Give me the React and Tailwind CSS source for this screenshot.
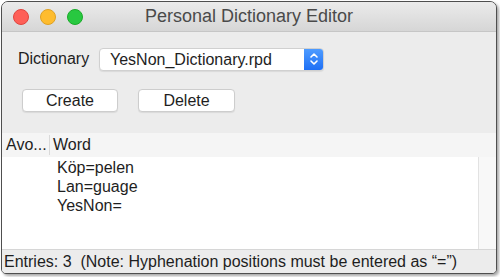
const rows = ["Köp=pelen", "Lan=guage", "YesNon="];

const Stepper = () => (
  <svg width="10" height="14" viewBox="0 0 10 14" fill="none" stroke="white" strokeWidth="1.6" strokeLinecap="round" strokeLinejoin="round">
    <path d="M2 5 L5 2 L8 5" />
    <path d="M2 9 L5 12 L8 9" />
  </svg>
);

const App = () => {
  return (
    <div
      className="w-[500px] h-[277px] bg-white pl-px pt-px overflow-hidden"
      style={{ fontFamily: '"Liberation Sans", Arial, sans-serif' }}
    >
      {/* WINDOW */}
      <div className="w-[496px] h-[273px] flex flex-col border border-[#4f4f4f] rounded-t-[7px] rounded-b-[5px] overflow-hidden bg-[#ececec] shadow-[2px_2px_3px_rgba(0,0,0,0.35)]">
        {/* TITLE BAR */}
        <div className="h-[30px] shrink-0 flex items-center relative border-b border-[#c6c6c6] bg-gradient-to-b from-[#ebebeb] to-[#d6d6d6]">
          <div className="flex items-center gap-[11px] pl-[11px]">
            <span className="w-[16px] h-[16px] rounded-full bg-[#fe5f57] border border-[#e0443e]"></span>
            <span className="w-[16px] h-[16px] rounded-full bg-[#febc2e] border border-[#dea123]"></span>
            <span className="w-[16px] h-[16px] rounded-full bg-[#28c840] border border-[#1aab29]"></span>
          </div>
          <div className="absolute inset-0 flex items-center justify-center text-[18px] text-[#4a4a4a] pointer-events-none">
            Personal Dictionary Editor
          </div>
        </div>

        {/* DICTIONARY SELECT */}
        <div className="flex items-center pl-[16px] pt-[15px] gap-[10px]">
          <span className="text-[16px] text-[#1e1e1e] w-[71px]">Dictionary</span>
          <div className="w-[225px] h-[23px] flex items-stretch bg-white rounded-[4px] border border-[#d0d0d0] shadow-[0_1px_1px_rgba(0,0,0,0.08)] overflow-hidden">
            <span className="flex-1 pl-[10px] text-[16px] text-[#1e1e1e] leading-[21px]">YesNon_Dictionary.rpd</span>
            <span className="w-[19px] flex items-center justify-center bg-gradient-to-b from-[#4d9bff] to-[#1e6ff5]">
              <Stepper />
            </span>
          </div>
        </div>

        {/* BUTTONS */}
        <div className="flex items-center pl-[20px] pt-[18px] gap-[20px]">
          <button className="w-[96px] h-[23px] bg-white rounded-[4px] border border-[#cdcdcd] shadow-[0_1px_1px_rgba(0,0,0,0.08)] text-[16px] text-[#1e1e1e] leading-[21px]">
            Create
          </button>
          <button className="w-[97px] h-[23px] bg-white rounded-[4px] border border-[#cdcdcd] shadow-[0_1px_1px_rgba(0,0,0,0.08)] text-[16px] text-[#1e1e1e] leading-[21px]">
            Delete
          </button>
        </div>

        {/* TABLE */}
        <div className="mt-[21px] flex flex-col flex-1 min-h-0">
          <div className="h-[24px] flex items-center bg-[#f5f5f5] text-[16px] text-[#1e1e1e]">
            <span className="w-[47px] pl-[4px]">Avo...</span>
            <span className="w-px h-[20px] bg-[#d9d9d9]"></span>
            <span className="pl-[3px]">Word</span>
          </div>
          <div className="flex flex-1 min-h-0 border-b border-[#d6d6d6]">
            <div className="flex-1 bg-white border-r border-[#e2e2e2] pt-px">
              {rows.map((r) => (
                <div key={r} className="h-[19px] pl-[55px] text-[16px] text-[#1e1e1e] leading-[19px]">
                  {r}
                </div>
              ))}
            </div>
            <div className="w-[17px] bg-[#f8f8f8]"></div>
          </div>
        </div>

        {/* STATUS */}
        <div className="h-[23px] shrink-0 flex items-center pl-[2px] text-[16px] text-[#1e1e1e] bg-[#ececec]">
          Entries: 3&nbsp; (Note: Hyphenation positions must be entered as “=”)
        </div>
      </div>
    </div>
  );
};

export default App;
